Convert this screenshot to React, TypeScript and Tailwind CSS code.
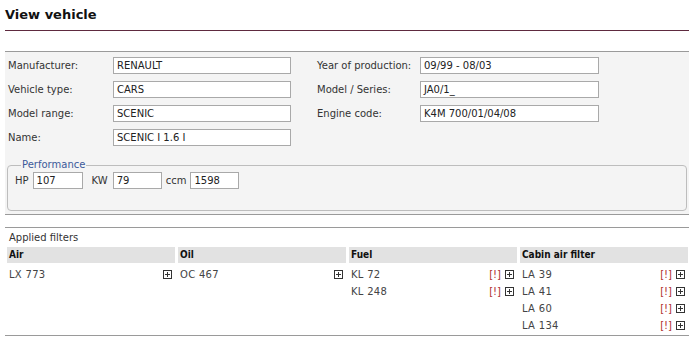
import React from 'react'

const fields = [
  ['Manufacturer:', 'RENAULT', 'Year of production:', '09/99 - 08/03'],
  ['Vehicle type:', 'CARS', 'Model / Series:', 'JA0/1_'],
  ['Model range:', 'SCENIC', 'Engine code:', 'K4M 700/01/04/08'],
  ['Name:', 'SCENIC I 1.6 I', '', ''],
]

const filters = [
  { title: 'Air', items: [{ code: 'LX 773', warn: false }] },
  { title: 'Oil', items: [{ code: 'OC 467', warn: false }] },
  {
    title: 'Fuel',
    items: [
      { code: 'KL 72', warn: true },
      { code: 'KL 248', warn: true },
    ],
  },
  {
    title: 'Cabin air filter',
    items: [
      { code: 'LA 39', warn: true },
      { code: 'LA 41', warn: true },
      { code: 'LA 60', warn: true },
      { code: 'LA 134', warn: true },
    ],
  },
]

function Plus() {
  return (
    <svg width="9" height="9" viewBox="0 0 9 9" className="block">
      <rect x="0.5" y="0.5" width="8" height="8" fill="#fff" stroke="#333" />
      <path d="M2 4.5h5M4.5 2v5" stroke="#333" />
    </svg>
  )
}

function Box({ value, className }: { value: string; className: string }) {
  return (
    <div className={`h-[17px] border border-[#a9a9a9] bg-white pl-[3px] leading-[15px] text-[#222] ${className}`}>
      {value}
    </div>
  )
}

export default function App() {
  return (
    <div className="w-[694px] h-[337px] bg-white font-['DejaVu_Sans',sans-serif] text-[10px] text-[#333] overflow-hidden">
      <h1 className="mx-[5px] h-[31px] border-b border-[#5e2a3f] pt-[7px] text-[13px] font-bold leading-[16px] text-[#111]">
        View vehicle
      </h1>

      <div className="mx-[5px] mt-[20px] border-t border-b border-[#9a9a9a] bg-[#f4f4f4] pt-[5px] pb-[3px]">
        <div className="flex flex-col gap-[7px]">
          {fields.map(([l1, v1, l2, v2]) => (
            <div key={l1} className="flex items-center h-[17px]">
              <div className="w-[108px] pl-[3px] leading-[17px]">{l1}</div>
              <Box value={v1} className="w-[178px]" />
              {l2 && (
                <>
                  <div className="ml-[26px] w-[103px] leading-[17px]">{l2}</div>
                  <Box value={v2} className="w-[179px]" />
                </>
              )}
            </div>
          ))}
        </div>

        {/* engine data */}
        <fieldset className="mx-[2px] mt-[13px] h-[52px] rounded-[4px] border border-[#bdbdbd] px-[7px]">
          <legend className="ml-[6px] px-[1px] leading-[12px] text-[#3c5a9a]">Performance</legend>
          <div className="mt-[1px] flex items-center">
            <span>HP</span>
            <Box value="107" className="ml-[4px] w-[50px]" />
            <span className="ml-[9px]">KW</span>
            <Box value="79" className="ml-[5px] w-[49px]" />
            <span className="ml-[4px]">ccm</span>
            <Box value="1598" className="ml-[4px] w-[49px]" />
          </div>
        </fieldset>
      </div>

      <div className="mx-[5px] mt-[12px] border-t border-b border-[#9a9a9a] pl-[2px] pr-[1px] pb-[1px]">
        <div className="pl-[2px] pt-[3px] h-[19px] leading-[14px]">Applied filters</div>
        <div className="grid grid-cols-4 gap-x-[3px]">
          {filters.map((col) => (
            <div key={col.title} className="flex flex-col">
              <div className="h-[16px] bg-[#e2e2e2] pl-[2px] font-['DejaVu_Sans_Condensed','DejaVu_Sans',sans-serif] font-bold leading-[16px] text-[#111]">
                {col.title}
              </div>
              <div className="mt-[3px] flex flex-col">
                {col.items.map((it) => (
                  <div key={it.code} className="flex h-[17px] items-center pl-[2px] pr-[3px]">
                    <span className="flex-1 tracking-[0.3px] text-[#444]">{it.code}</span>
                    {it.warn && <span className="mr-[4px] text-[#b03030]">[!]</span>}
                    <Plus />
                  </div>
                ))}
              </div>
            </div>
          ))}
        </div>
      </div>
    </div>
  )
}
